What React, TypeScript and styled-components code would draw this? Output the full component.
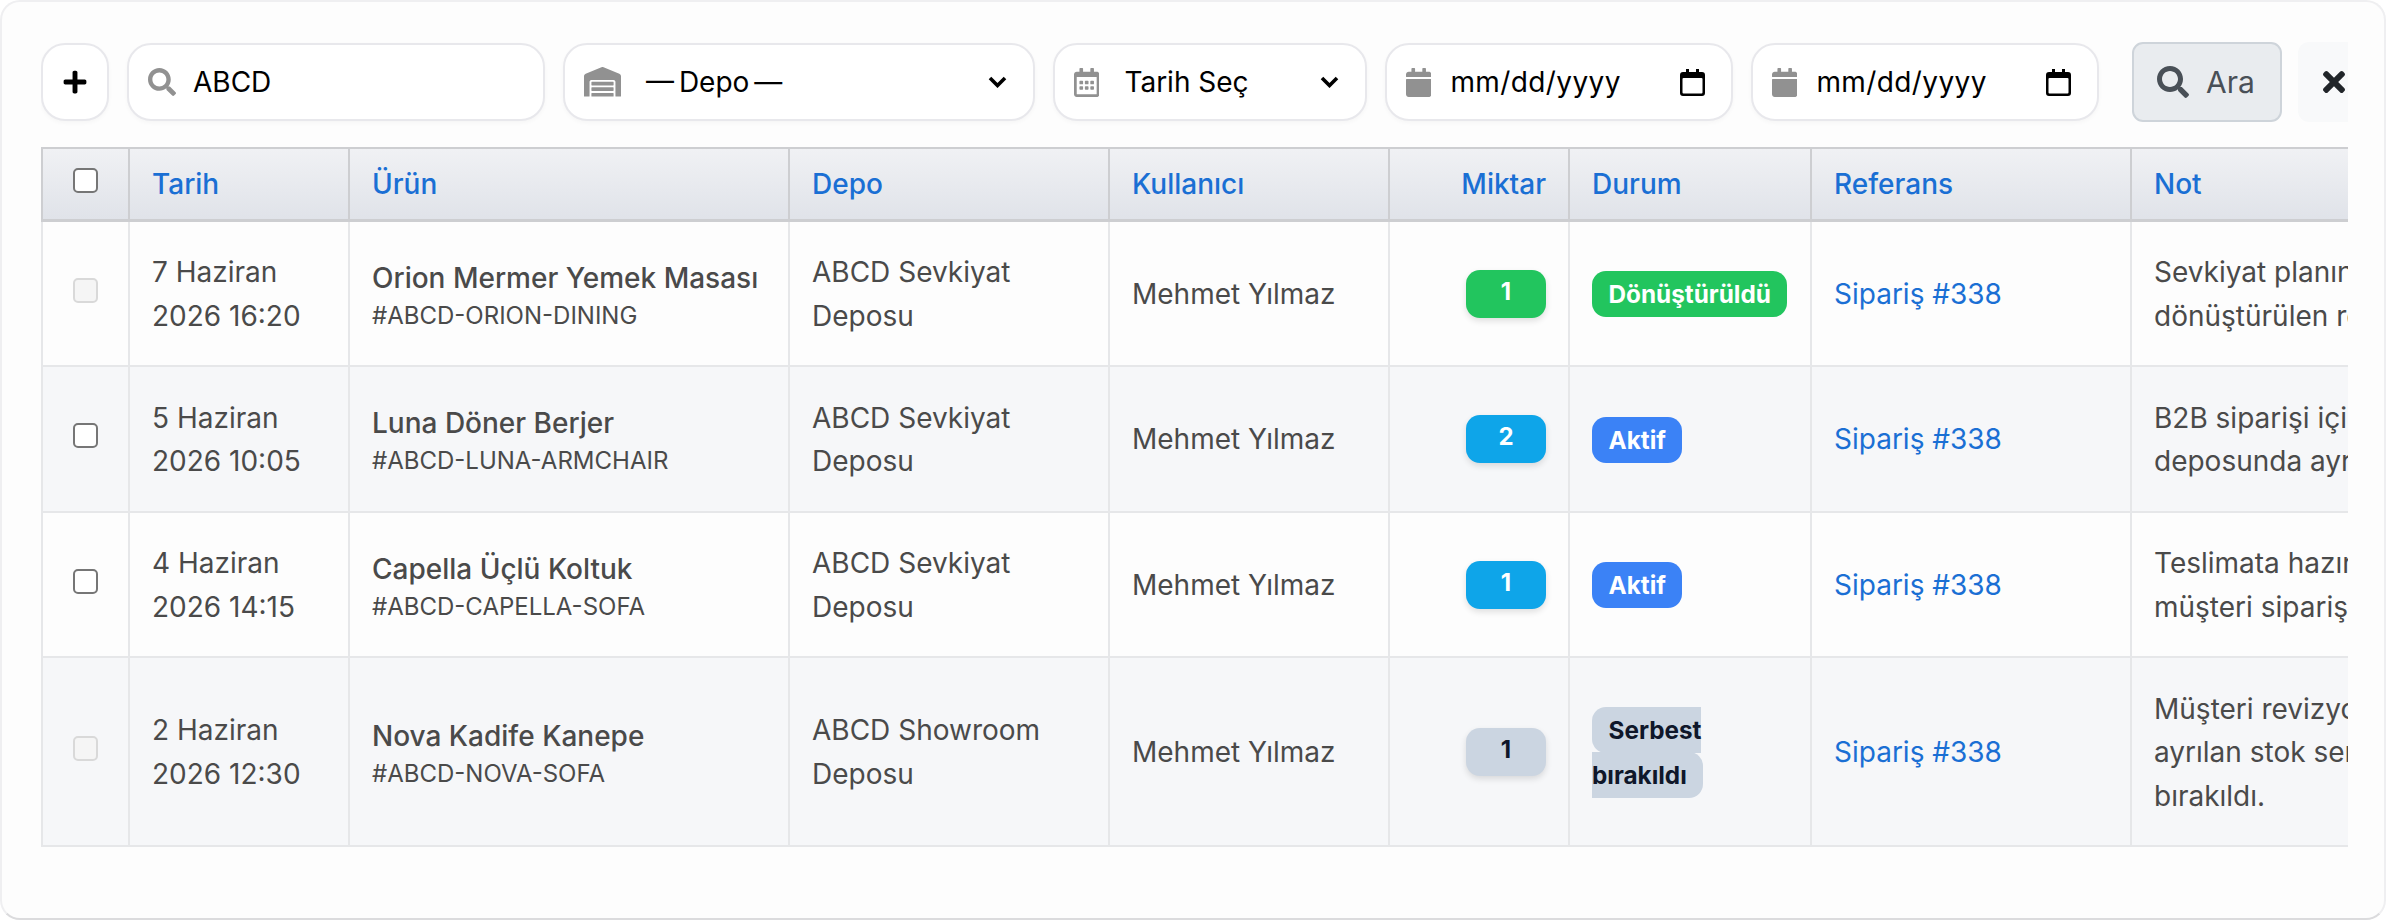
import React from "react";
import styled, { createGlobalStyle } from "styled-components";
import { FaPlus, FaSearch, FaWarehouse, FaRegCalendarAlt, FaCalendar, FaTimes } from "react-icons/fa";

const GlobalStyle = createGlobalStyle`
  * { box-sizing: border-box; }
  html, body { margin: 0; background: #ffffff; }
  body { font-family: "Inter", "Liberation Sans", sans-serif; }
`;

const Page = styled.div`
  width: 2388px;
  height: 922px;
  padding: 0 2px 2px 0;
  overflow: hidden;
`;

const Card = styled.main`
  height: 100%;
  padding: 40px 36px 0 39px;
  background: #fdfdfd;
  border: 2px solid #efeff1;
  border-bottom-color: #dbdbdd;
  border-radius: 20px;
`;

const Scroller = styled.div`
  overflow: hidden;
`;

const Toolbar = styled.div`
  display: flex;
  align-items: center;
  gap: 18px;
  width: 2420px;
  height: 80px;
  margin-bottom: 25px;
`;

const Field = styled.div<{ $width: number; $gap?: number }>`
  display: flex;
  flex: none;
  align-items: center;
  gap: ${({ $gap }) => $gap ?? 25}px;
  width: ${({ $width }) => $width}px;
  height: 78px;
  padding: 0 26px 0 19px;
  font-size: 28px;
  color: #000000;
  background: #ffffff;
  border: 2px solid #e8e8ec;
  border-radius: 24px;
  box-shadow: 0 2px 4px rgba(0, 0, 0, 0.03);
`;

const AddButton = styled(Field)`
  justify-content: center;
  padding: 0;
  font-size: 26px;
`;

const FieldIcon = styled.span<{ $w: number; $h: number }>`
  display: flex;
  flex: none;
  color: #919191;

  svg {
    width: ${({ $w }) => $w}px;
    height: ${({ $h }) => $h}px;
  }
`;

const DepotLabel = styled.span`
  word-spacing: -3px;
`;

const DateMask = styled.span`
  letter-spacing: 0.4px;
`;

const EndIcon = styled.svg`
  flex: none;
  margin-left: auto;
`;

const SearchButton = styled.button`
  display: flex;
  flex: none;
  align-items: center;
  gap: 17px;
  width: 150px;
  height: 80px;
  margin-left: 15px;
  padding: 0 0 0 23px;
  font-family: inherit;
  font-size: 30px;
  color: #495057;
  background: #e9ecef;
  border: 2px solid #ced4da;
  border-radius: 11px;
`;

const ClearButton = styled.button`
  display: flex;
  flex: none;
  align-items: center;
  width: 100px;
  height: 80px;
  margin-left: -2px;
  padding: 0 0 0 25px;
  color: #212529;
  background: #f8f9fa;
  border: 0;
  border-radius: 11px;

  svg {
    width: 22px;
    height: 32px;
  }
`;

const Table = styled.table`
  width: 2489px;
  table-layout: fixed;
  border-collapse: collapse;
  font-size: 28px;
  line-height: 43.5px;
  color: #4a4a4a;
`;

const HeadCell = styled.th<{ $right?: boolean }>`
  padding: 14px 22px 12px;
  font-weight: 500;
  color: #1a6fd4;
  text-align: ${({ $right }) => ($right ? "right" : "left")};
  background: linear-gradient(to bottom, #f0f1f4, #e0e3e9);
  border: 2px solid #cdced1;
  border-bottom-width: 3px;
`;

const Row = styled.tr<{ $striped: boolean }>`
  background: ${({ $striped }) => ($striped ? "#f6f7f9" : "#fdfdfd")};
`;

const Cell = styled.td<{ $right?: boolean }>`
  padding: 29.5px 22px 27px;
  text-align: ${({ $right }) => ($right ? "right" : "left")};
  vertical-align: middle;
  border: 2px solid #e6e7e9;
`;

const CheckCell = styled(Cell)`
  padding: 0;
  text-align: center;
`;

const CheckHead = styled(HeadCell)`
  padding: 0;
  text-align: center;
`;

const Check = styled.input.attrs({ type: "checkbox" })`
  display: block;
  width: 25px;
  height: 25px;
  margin: -6px auto 0;
  appearance: none;
  background: #ffffff;
  border: 2px solid #767676;
  border-radius: 5px;

  &:disabled {
    background: #f5f5f5;
    border-color: #d9d9d9;
  }
`;

const ProductName = styled.div`
  padding-top: 4px;
  font-weight: 500;
  line-height: 37px;
`;

const Sku = styled.div`
  font-size: 24px;
  line-height: 37px;
`;

const RefLink = styled.a`
  color: #1a6fd4;
  text-decoration: none;
`;

const QtyBadge = styled.span<{ $tone: Tone }>`
  display: inline-block;
  width: 80px;
  height: 48px;
  margin-top: -2px;
  font-size: 24px;
  font-weight: 700;
  line-height: 44px;
  text-align: center;
  color: ${({ $tone }) => tones[$tone].color};
  background: ${({ $tone }) => tones[$tone].background};
  border-radius: 14px;
  box-shadow: 0 3px 6px rgba(0, 0, 0, 0.12);
  vertical-align: middle;
`;

const StatusBadge = styled.span<{ $tone: Tone }>`
  padding: 8px 16.5px;
  font-size: 24.3px;
  font-weight: 700;
  color: ${({ $tone }) => tones[$tone].color};
  background: ${({ $tone }) => tones[$tone].background};
  border-radius: 14px;
`;

type Tone = "green" | "cyan" | "blue" | "slate";

const tones: Record<Tone, { color: string; background: string }> = {
  green: { color: "#ffffff", background: "#22c55e" },
  cyan: { color: "#ffffff", background: "#0ea5e9" },
  blue: { color: "#ffffff", background: "#3b82f6" },
  slate: { color: "#0f172a", background: "#cbd5e1" },
};

const Chevron = () => (
  <EndIcon width="19" height="12" viewBox="0 0 19 12">
    <path d="M2 2l7.5 7.5L17 2" fill="none" stroke="#000" strokeWidth="3.6" />
  </EndIcon>
);

const DateIndicator = () => (
  <EndIcon width="25" height="27" viewBox="0 0 25 27">
    <path d="M6 0h3v3h7V0h3v3h3a3 3 0 0 1 3 3v18a3 3 0 0 1-3 3H3a3 3 0 0 1-3-3V6a3 3 0 0 1 3-3h3z" fill="#000" />
    <rect x="2.5" y="9" width="20" height="15.5" rx="1" fill="#fff" />
  </EndIcon>
);

const columns = [
  { label: "Tarih", width: 220 },
  { label: "Ürün", width: 440 },
  { label: "Depo", width: 320 },
  { label: "Kullanıcı", width: 280 },
  { label: "Miktar", width: 180, right: true },
  { label: "Durum", width: 242 },
  { label: "Referans", width: 320 },
  { label: "Not", width: 400 },
];

const rows = [
  {
    date: "7 Haziran 2026 16:20",
    name: "Orion Mermer Yemek Masası",
    sku: "#ABCD-ORION-DINING",
    depot: "ABCD Sevkiyat Deposu",
    qty: "1",
    qtyTone: "green" as Tone,
    status: "Dönüştürüldü",
    statusTone: "green" as Tone,
    note: "Sevkiyat planına alınarak dönüştürülen rezervasyon.",
    locked: true,
  },
  {
    date: "5 Haziran 2026 10:05",
    name: "Luna Döner Berjer",
    sku: "#ABCD-LUNA-ARMCHAIR",
    depot: "ABCD Sevkiyat Deposu",
    qty: "2",
    qtyTone: "cyan" as Tone,
    status: "Aktif",
    statusTone: "blue" as Tone,
    note: "B2B siparişi için sevkiyat deposunda ayrılan stok.",
    locked: false,
  },
  {
    date: "4 Haziran 2026 14:15",
    name: "Capella Üçlü Koltuk",
    sku: "#ABCD-CAPELLA-SOFA",
    depot: "ABCD Sevkiyat Deposu",
    qty: "1",
    qtyTone: "cyan" as Tone,
    status: "Aktif",
    statusTone: "blue" as Tone,
    note: "Teslimata hazırlanan müşteri siparişi için ayrıldı.",
    locked: false,
  },
  {
    date: "2 Haziran 2026 12:30",
    name: "Nova Kadife Kanepe",
    sku: "#ABCD-NOVA-SOFA",
    depot: "ABCD Showroom Deposu",
    qty: "1",
    qtyTone: "slate" as Tone,
    status: "Serbest bırakıldı",
    statusTone: "slate" as Tone,
    note: "Müşteri revizyonu sonrası ayrılan stok serbest bırakıldı.",
    locked: true,
  },
];

export default function App() {
  return (
    <Page>
      <GlobalStyle />
      <Card>
        <Scroller>
          <Toolbar>
            <AddButton $width={68}>
              <FaPlus />
            </AddButton>
            <Field $width={418} $gap={17}>
              <FieldIcon $w={28} $h={28}>
                <FaSearch />
              </FieldIcon>
              ABCD
            </Field>
            <Field $width={472}>
              <FieldIcon $w={37} $h={29.6}>
                <FaWarehouse />
              </FieldIcon>
              <DepotLabel>— Depo —</DepotLabel>
              <Chevron />
            </Field>
            <Field $width={314}>
              <FieldIcon $w={25.4} $h={29}>
                <FaRegCalendarAlt />
              </FieldIcon>
              Tarih Seç
              <Chevron />
            </Field>
            <Field $width={348} $gap={19}>
              <FieldIcon $w={25.4} $h={29}>
                <FaCalendar />
              </FieldIcon>
              <DateMask>mm/dd/yyyy</DateMask>
              <DateIndicator />
            </Field>
            <Field $width={348} $gap={19}>
              <FieldIcon $w={25.4} $h={29}>
                <FaCalendar />
              </FieldIcon>
              <DateMask>mm/dd/yyyy</DateMask>
              <DateIndicator />
            </Field>
            <SearchButton>
              <FaSearch size={32} />
              Ara
            </SearchButton>
            <ClearButton>
              <FaTimes />
            </ClearButton>
          </Toolbar>
          <Table>
            <colgroup>
              <col style={{ width: 87 }} />
              {columns.map((column) => (
                <col key={column.label} style={{ width: column.width }} />
              ))}
            </colgroup>
            <thead>
              <tr>
                <CheckHead>
                  <Check />
                </CheckHead>
                {columns.map((column) => (
                  <HeadCell key={column.label} $right={column.right}>
                    {column.label}
                  </HeadCell>
                ))}
              </tr>
            </thead>
            <tbody>
              {rows.map((row, index) => (
                <Row key={row.sku} $striped={index % 2 === 1}>
                  <CheckCell>
                    <Check disabled={row.locked} />
                  </CheckCell>
                  <Cell>{row.date}</Cell>
                  <Cell>
                    <ProductName>{row.name}</ProductName>
                    <Sku>{row.sku}</Sku>
                  </Cell>
                  <Cell>{row.depot}</Cell>
                  <Cell>Mehmet Yılmaz</Cell>
                  <Cell $right>
                    <QtyBadge $tone={row.qtyTone}>{row.qty}</QtyBadge>
                  </Cell>
                  <Cell>
                    <StatusBadge $tone={row.statusTone}>{row.status}</StatusBadge>
                  </Cell>
                  <Cell>
                    <RefLink href="#">Sipariş #338</RefLink>
                  </Cell>
                  <Cell>{row.note}</Cell>
                </Row>
              ))}
            </tbody>
          </Table>
        </Scroller>
      </Card>
    </Page>
  );
}
